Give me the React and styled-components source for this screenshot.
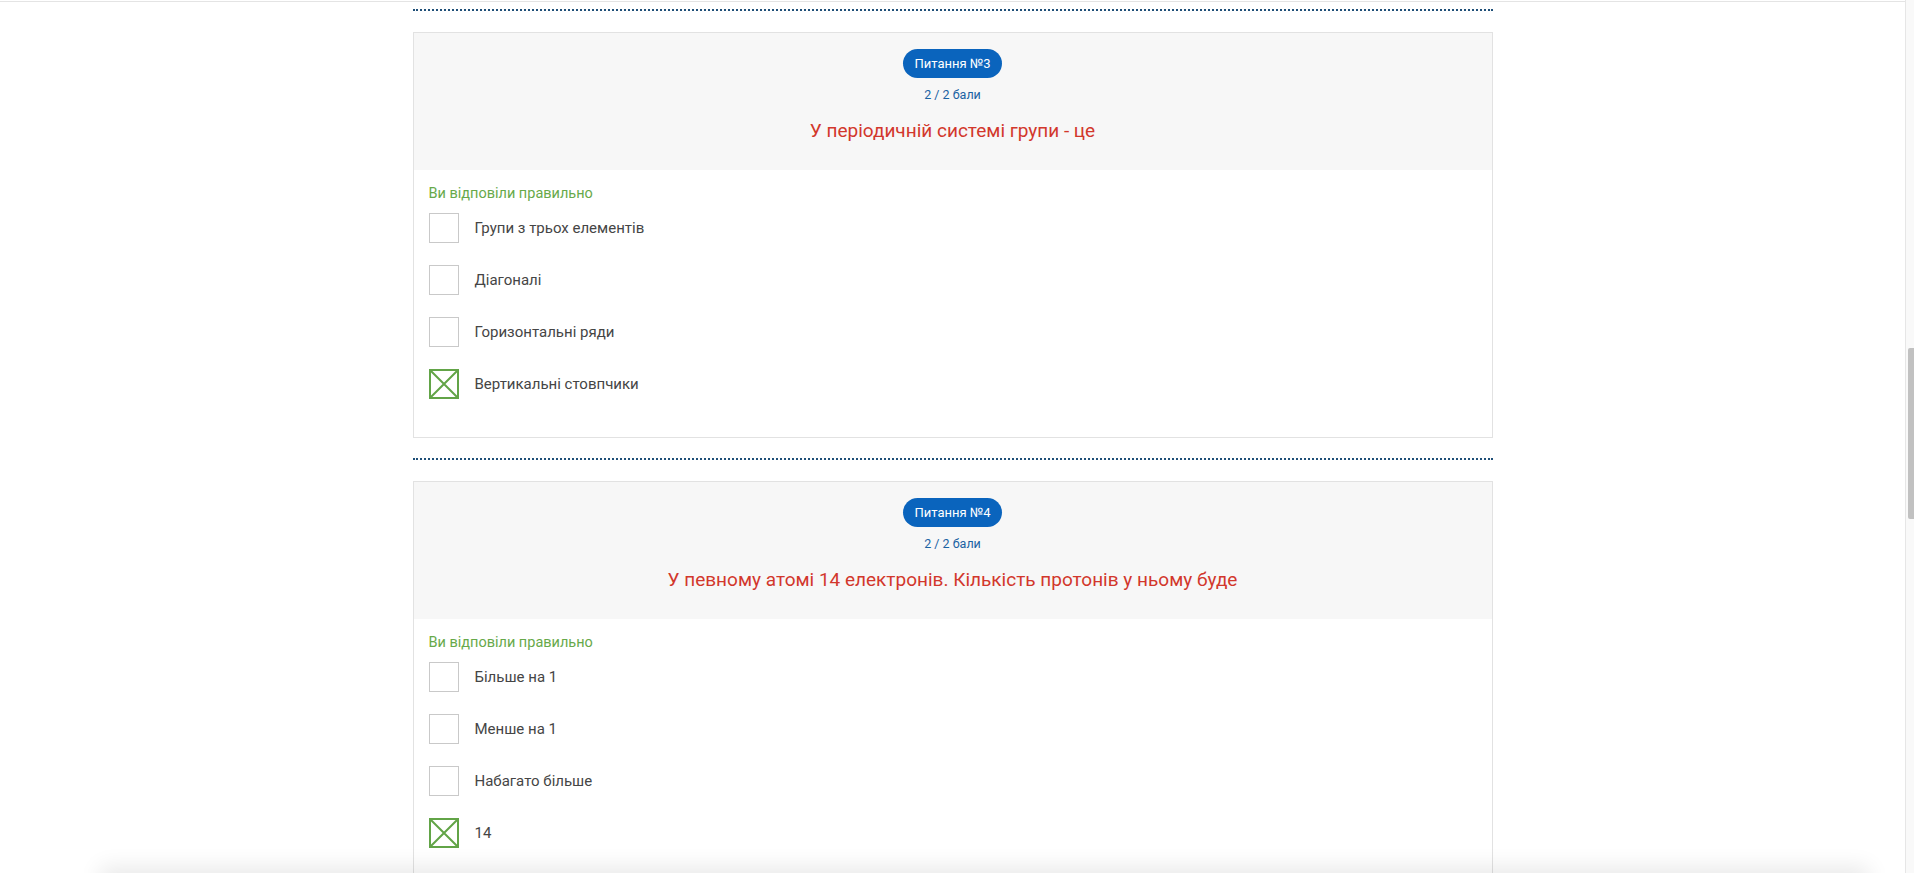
import React from 'react';
import styled, { createGlobalStyle } from 'styled-components';

const GlobalStyle = createGlobalStyle`
  html, body {
    margin: 0;
    padding: 0;
    background-color: #ffffff;
    overflow: hidden;
  }
  body {
    font-family: Roboto, 'Noto Sans', sans-serif;
  }
`;

const Page = styled.div`
  display: flex;
  height: 100vh;
  overflow: hidden;
`;

const Main = styled.main`
  flex: 1;
  margin-top: 1px;
  border-top: 1px solid #e4e4e4;
  overflow: hidden;
`;

const Column = styled.div`
  width: 1080px;
  margin: 0 auto;
  padding-top: 7px;
`;

const Separator = styled.div`
  height: 0;
  border-top: 2px dotted #1f4f78;
  margin-bottom: 21px;
`;

const Card = styled.section`
  margin-bottom: 20px;
  border: 1px solid #e2e2e2;
  background-color: #ffffff;
`;

const Header = styled.header`
  display: flex;
  flex-direction: column;
  align-items: center;
  padding: 16px 20px 0;
  height: 121px;
  background-color: #f7f7f7;
`;

const Badge = styled.span`
  display: inline-flex;
  align-items: center;
  height: 29px;
  padding: 0 11px;
  border-radius: 15px;
  background-color: #0a64bd;
  color: #ffffff;
  font-size: 13px;
`;

const Score = styled.span`
  margin-top: 9px;
  color: #1b63a3;
  font-size: 12.5px;
  line-height: 16px;
`;

const Question = styled.h3`
  margin: 16px 0 0;
  color: #d2372c;
  font-size: 19px;
  font-weight: 400;
  line-height: 24px;
`;

const Body = styled.div`
  padding: 14px 15px 38px;
`;

const Verdict = styled.div`
  color: #67a94a;
  font-size: 14.5px;
  line-height: 20px;
  margin-bottom: 9px;
`;

const Options = styled.ul`
  display: flex;
  flex-direction: column;
  gap: 22px;
  margin: 0;
  padding: 0;
  list-style: none;
`;

const Option = styled.li`
  display: flex;
  align-items: center;
  gap: 16px;
  height: 30px;
  color: #454545;
  font-size: 15px;
  line-height: 30px;
`;

const Box = styled.span`
  display: flex;
  box-sizing: border-box;
  width: 30px;
  height: 30px;
  flex-shrink: 0;
  border: ${({ $checked }) => ($checked ? '2px solid #62a447' : '1px solid #c9c9c9')};
  background-color: #ffffff;
`;

const ScrollTrack = styled.div`
  width: 8px;
  border-left: 1px solid #e6e6e6;
  background-color: #f9f9f9;
  display: flex;
  flex-direction: column;
  align-items: flex-end;
`;

const ScrollThumb = styled.div`
  margin-top: 348px;
  width: 6px;
  height: 171px;
  border-radius: 2px 0 0 2px;
  background-color: #c1c1c1;
`;

const BottomShade = styled.div`
  position: fixed;
  left: 100px;
  right: 45px;
  bottom: -30px;
  height: 30px;
  box-shadow: 0 -6px 22px rgba(0, 0, 0, 0.09);
  background-color: #ffffff;
`;

const questions = [
  {
    id: 3,
    text: 'У періодичній системі групи - це',
    options: ['Групи з трьох елементів', 'Діагоналі', 'Горизонтальні ряди', 'Вертикальні стовпчики'],
    picked: 3,
  },
  {
    id: 4,
    text: 'У певному атомі 14 електронів. Кількість протонів у ньому буде',
    options: ['Більше на 1', 'Менше на 1', 'Набагато більше', '14'],
    picked: 3,
  },
];

const Check = ({ checked }) => (
  <Box $checked={checked}>
    {checked && (
      <svg width="26" height="26" viewBox="0 0 26 26">
        <path d="M0 0L26 26M26 0L0 26" stroke="#62a447" strokeWidth="2" />
      </svg>
    )}
  </Box>
);

const QuestionCard = ({ question }) => (
  <>
    <Separator />
    <Card>
      <Header>
        <Badge>Питання №{question.id}</Badge>
        <Score>2 / 2 бали</Score>
        <Question>{question.text}</Question>
      </Header>
      <Body>
        <Verdict>Ви відповіли правильно</Verdict>
        <Options>
          {question.options.map((option, i) => (
            <Option key={option}>
              <Check checked={i === question.picked} />
              {option}
            </Option>
          ))}
        </Options>
      </Body>
    </Card>
  </>
);

const App = () => (
  <>
    <GlobalStyle />
    <Page>
      <Main>
        <Column>
          {questions.map((q) => (
            <QuestionCard key={q.id} question={q} />
          ))}
        </Column>
      </Main>
      <ScrollTrack>
        <ScrollThumb />
      </ScrollTrack>
    </Page>
    <BottomShade />
  </>
);

export default App;
